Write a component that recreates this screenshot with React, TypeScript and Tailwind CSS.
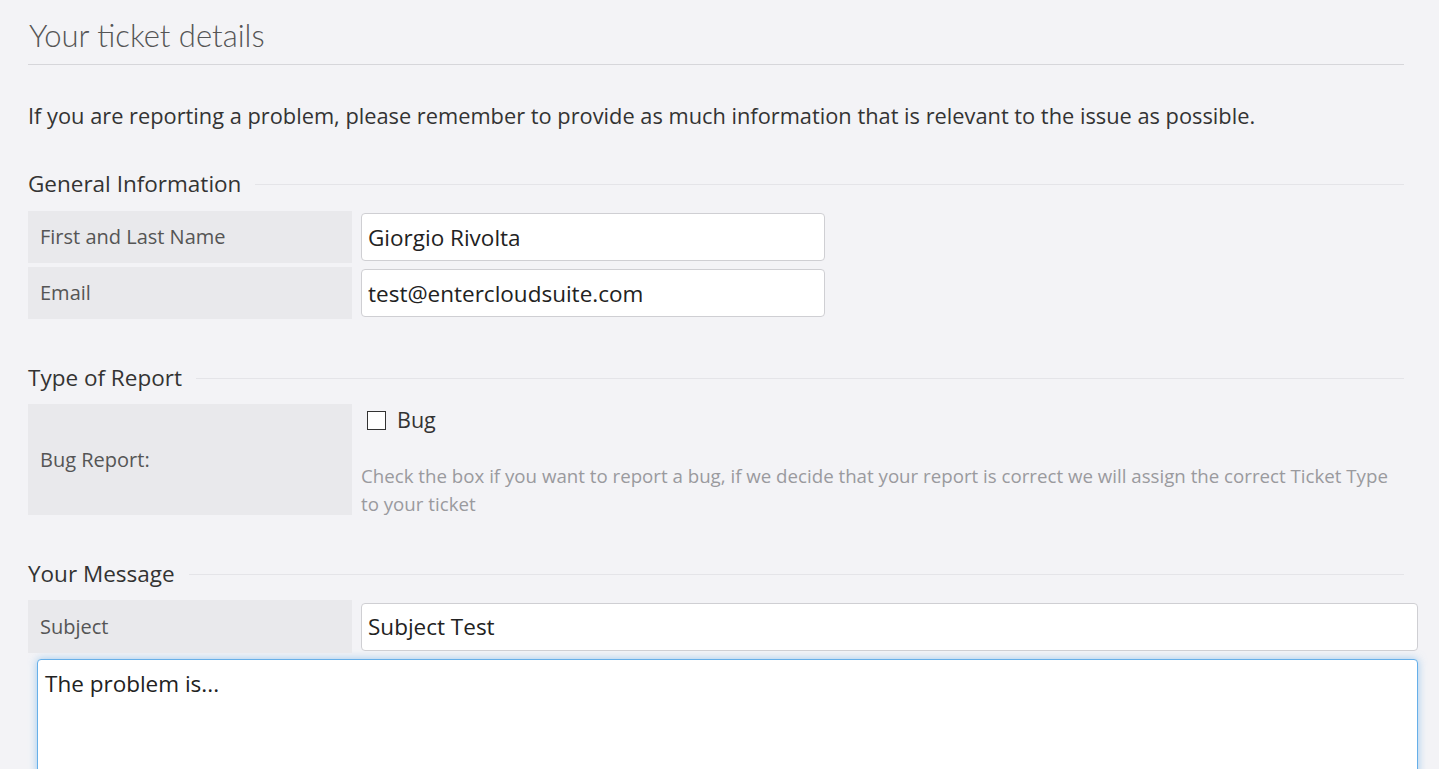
import React from 'react';

const SectionHeading: React.FC<{ title: string }> = ({ title }) => (
  <div className="flex w-[1376px] items-center">
    <h2 className="text-[22.5px] leading-[30px] text-[#333]">{title}</h2>
    <div className="ml-[14px] flex-1 border-t border-[#e4e4e8]" />
  </div>
);

const FieldRow: React.FC<{ label: string; value: string; wide?: boolean }> = ({ label, value, wide }) => (
  <div className={`flex items-center ${wide ? 'h-[53px]' : 'h-[52px]'}`}>
    <div className="flex h-full w-[324px] items-center bg-[#e9e9ec] pl-[12px] text-[20px] text-[#555]">{label}</div>
    <input
      readOnly
      value={value}
      className={`ml-[9px] h-[48px] rounded-[4px] border border-[#cfcfd3] bg-white px-[6px] text-[22.5px] text-[#222] outline-none ${wide ? 'w-[1057px]' : 'w-[464px]'}`}
    />
  </div>
);

const App: React.FC = () => {
  return (
    <div
      className="min-h-screen overflow-hidden bg-[#f3f3f6] pl-[28px]"
      style={{ fontFamily: '"Open Sans", "Noto Sans", sans-serif' }}
    >
      <div className="w-[1390px]">
        <h1
          className="w-[1376px] border-b border-[#d6d6da] pt-[15px] pb-[9px] pl-[1px] text-[31px] font-light leading-[40px] text-[#555]"
          style={{ fontFamily: 'Lato, "Open Sans", sans-serif' }}
        >
          Your ticket details
        </h1>

        <p className="mt-[37px] text-[21.8px] leading-[28px] text-[#333]">
          If you are reporting a problem, please remember to provide as much information that is relevant to the issue as possible.
        </p>

        <div className="mt-[39px]">
          <SectionHeading title="General Information" />
        </div>
        <div className="mt-[12px] flex flex-col gap-[4px]">
          <FieldRow label="First and Last Name" value="Giorgio Rivolta" />
          <FieldRow label="Email" value="test@entercloudsuite.com" />
        </div>

        <div className="mt-[44px]">
          <SectionHeading title="Type of Report" />
        </div>
        <div className="mt-[11px] flex">
          <div className="flex h-[111px] w-[324px] items-center bg-[#e9e9ec] pl-[12px] text-[20px] text-[#555]">
            Bug Report:
          </div>
          <div className="ml-[9px] w-[1045px] pt-[2px]">
            <label className="flex h-[28px] items-center pl-[6px] text-[21.5px] text-[#333]">
              <span className="h-[19px] w-[19px] border border-[#333] bg-white" />
              <span className="ml-[11px]">Bug</span>
            </label>
            <p className="mt-[28px] text-[18.7px] leading-[28px] text-[#9a9a9e]">
              Check the box if you want to report a bug, if we decide that your report is correct we will assign the correct Ticket Type to your ticket
            </p>
          </div>
        </div>

        <div className="mt-[41px]">
          <SectionHeading title="Your Message" />
        </div>
        <div className="mt-[11px]">
          <FieldRow label="Subject" value="Subject Test" wide />
        </div>
        <textarea
          readOnly
          value="The problem is..."
          className="mt-[6px] ml-[9px] block h-[140px] w-[1381px] resize-none rounded-[4px] border border-[#66afe9] bg-white px-[7px] py-[9px] text-[22.5px] leading-[30px] text-[#222] shadow-[0_0_8px_rgba(102,175,233,0.6)] outline-none"
        />
      </div>
    </div>
  );
};

export default App;
